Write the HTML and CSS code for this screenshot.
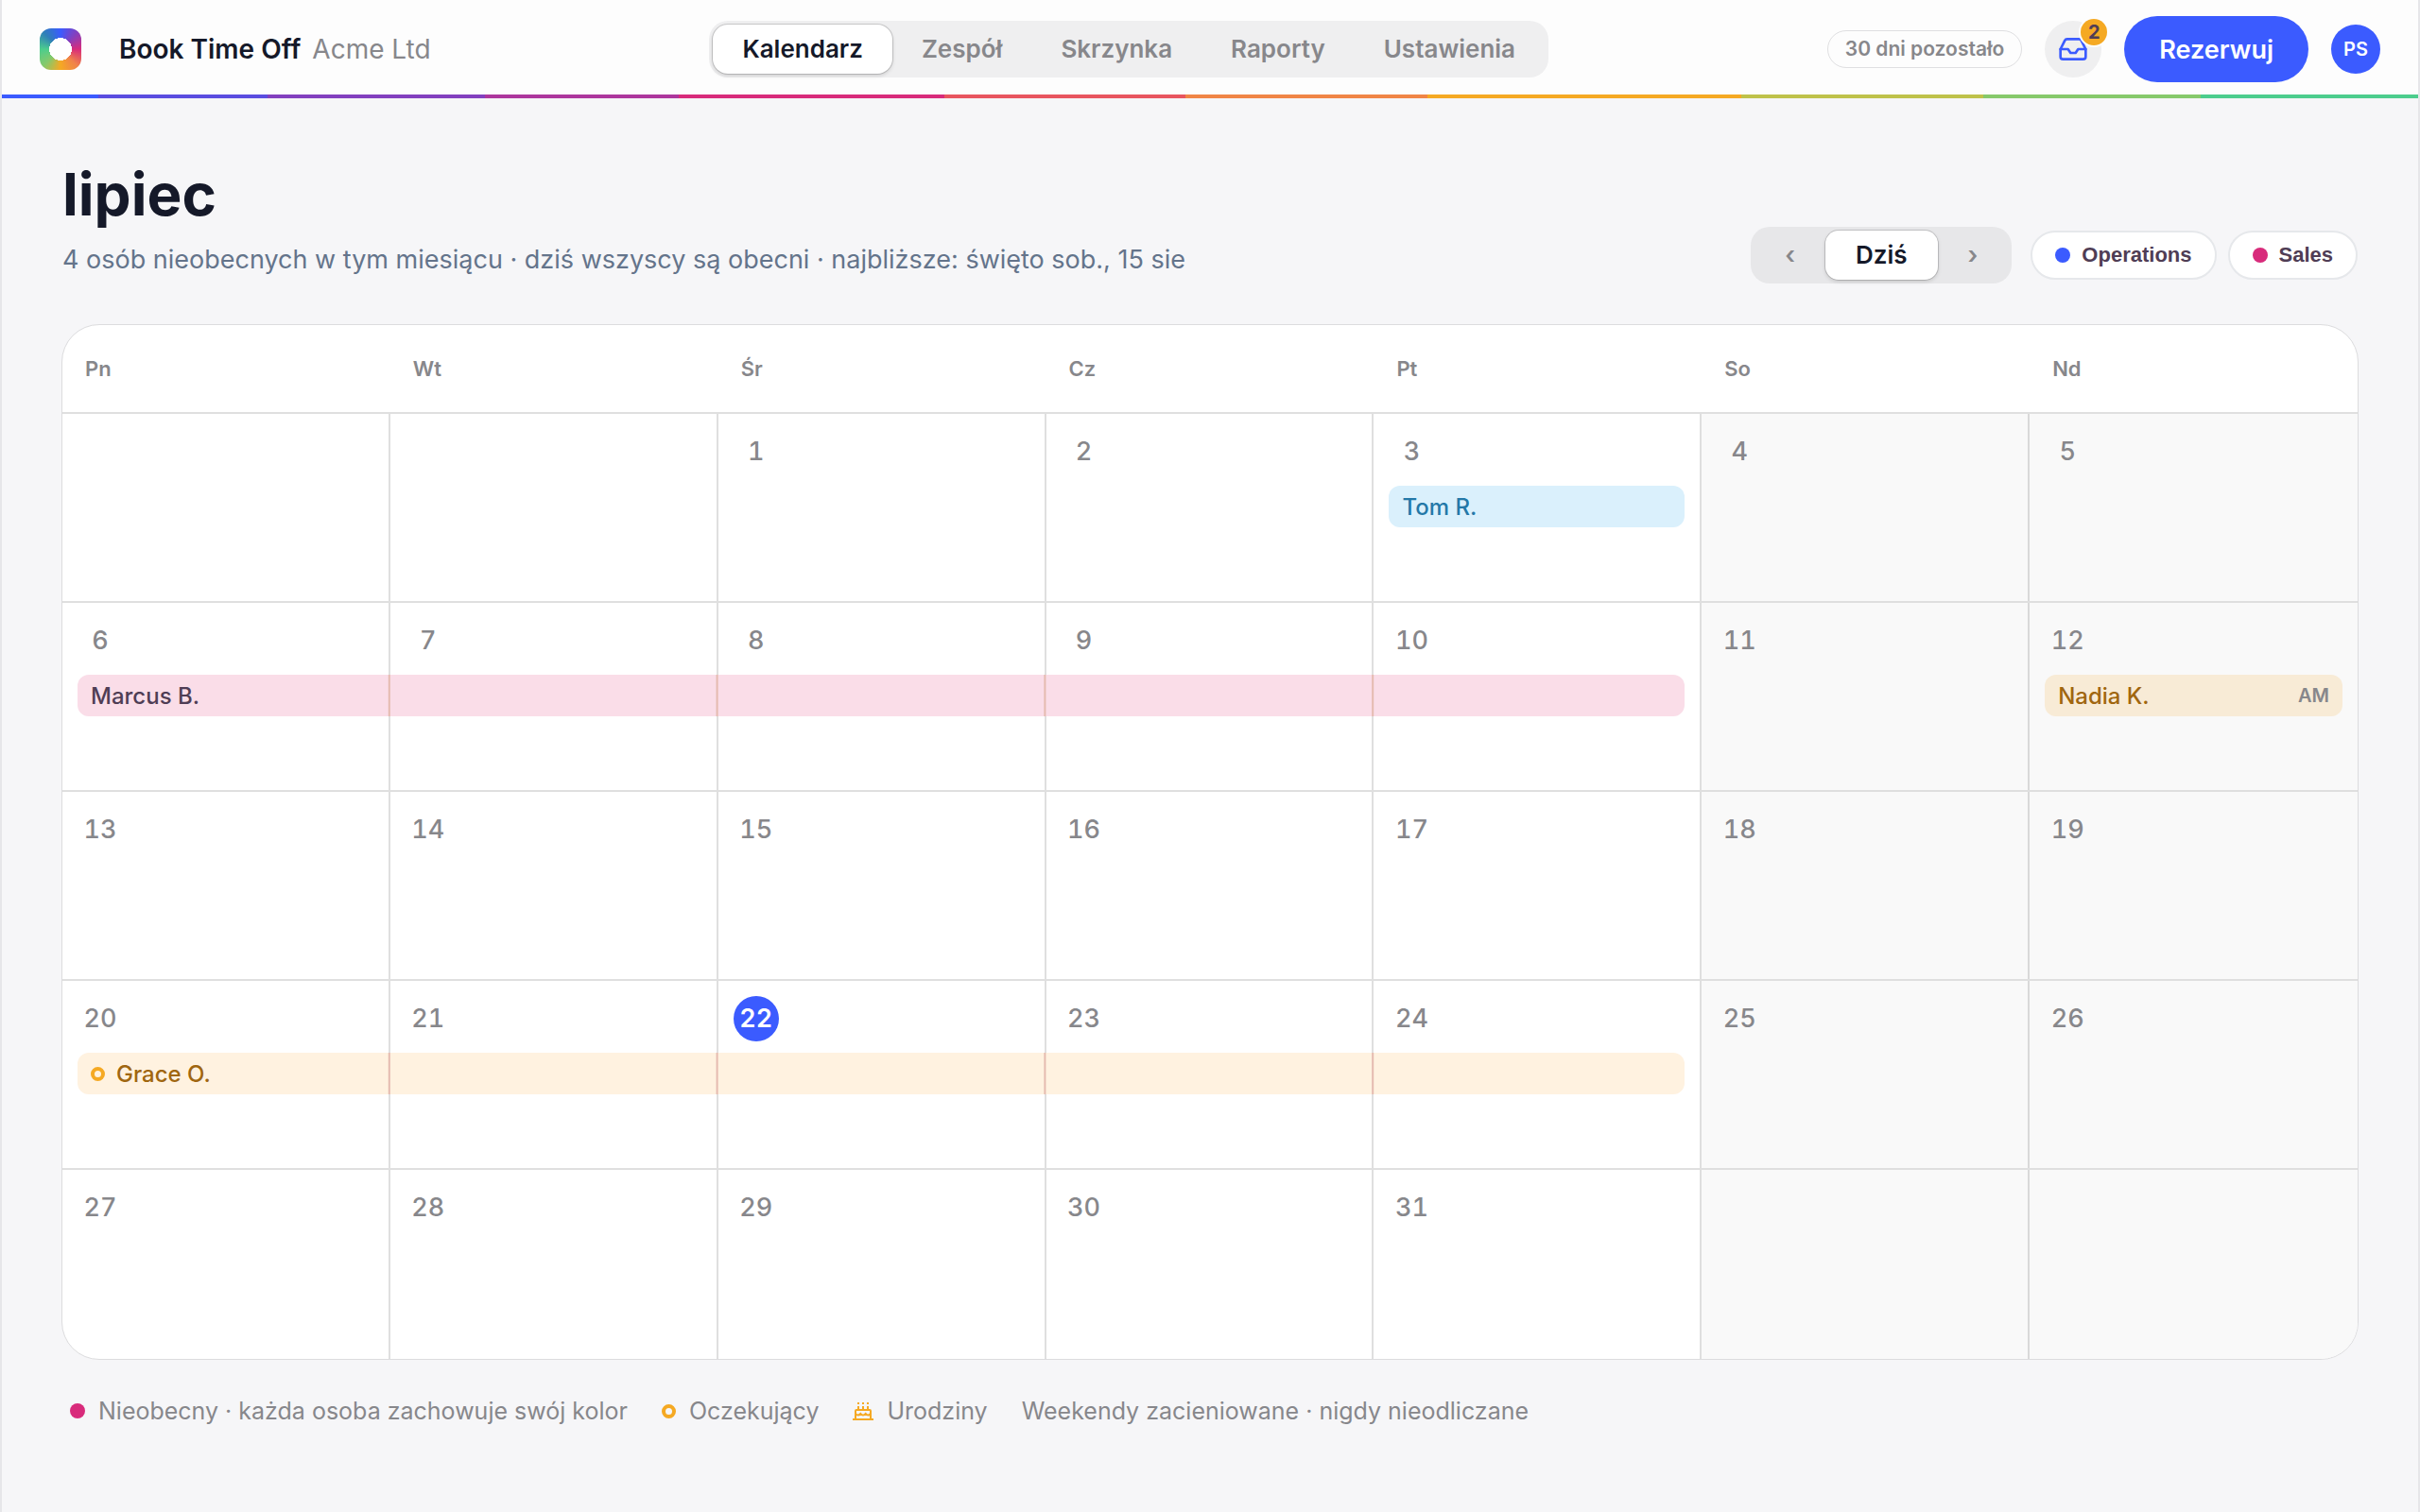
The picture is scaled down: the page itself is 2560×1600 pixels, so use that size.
FILE: index.html
```html
<!DOCTYPE html>
<html lang="pl">
<head>
    <meta charset="UTF-8">
    <meta name="viewport" content="width=device-width, initial-scale=1.0">
    <title>Book Time Off</title>
    <link rel="stylesheet" href="styles.css">
</head>
<body>
    <header class="topbar">
        <div class="brand">
            <div class="logo"></div>
            <div class="brand-text">
                <strong>Book Time Off</strong>
                <span>Acme Ltd</span>
            </div>
        </div>
        <nav class="tabs">
            <a href="#" class="tab active">Kalendarz</a>
            <a href="#" class="tab">Zespół</a>
            <a href="#" class="tab">Skrzynka</a>
            <a href="#" class="tab">Raporty</a>
            <a href="#" class="tab">Ustawienia</a>
        </nav>
        <div class="tools">
            <span class="days-left">30 dni pozostało</span>
            <button class="inbox" aria-label="Skrzynka">
                <svg viewBox="0 0 24 24" width="32" height="32" fill="none" stroke="currentColor" stroke-width="2" stroke-linejoin="round" stroke-linecap="round">
                    <path d="M22 12h-6l-2 3h-4l-2-3H2"/>
                    <path d="M5.450 5.110 2 12v6a2 2 0 0 0 2 2h16a2 2 0 0 0 2-2v-6l-3.450-6.890A2 2 0 0 0 16.760 4H7.240a2 2 0 0 0-1.790 1.110z"/>
                </svg>
                <span class="badge">2</span>
            </button>
            <button class="book">Rezerwuj</button>
            <span class="avatar">PS</span>
        </div>
    </header>
    <div class="stripe"></div>

    <main>
        <div class="page-head">
            <div>
                <h1>lipiec</h1>
                <p class="summary">4 osób nieobecnych w tym miesiącu · dziś wszyscy są obecni · najbliższe: święto sob., 15 sie</p>
            </div>
            <div class="filters">
                <div class="pager">
                    <button aria-label="Poprzedni">‹</button>
                    <button class="active">Dziś</button>
                    <button aria-label="Następny">›</button>
                </div>
                <div class="chips">
                    <button class="chip"><span class="dot blue"></span>Operations</button>
                    <button class="chip"><span class="dot pink"></span>Sales</button>
                </div>
            </div>
        </div>

        <section class="calendar">
            <div class="weekdays">
                <div>Pn</div>
                <div>Wt</div>
                <div>Śr</div>
                <div>Cz</div>
                <div>Pt</div>
                <div>So</div>
                <div>Nd</div>
            </div>
            <div class="week">
                <div class="day"></div>
                <div class="day"></div>
                <div class="day"><span>1</span></div>
                <div class="day"><span>2</span></div>
                <div class="day"><span>3</span></div>
                <div class="day"><span>4</span></div>
                <div class="day"><span>5</span></div>
                <div class="event friday sky">Tom R.</div>
            </div>
            <div class="week">
                <div class="day"><span>6</span></div>
                <div class="day"><span>7</span></div>
                <div class="day"><span>8</span></div>
                <div class="day"><span>9</span></div>
                <div class="day"><span>10</span></div>
                <div class="day"><span>11</span></div>
                <div class="day"><span>12</span></div>
                <div class="event workweek rose">Marcus B.</div>
                <div class="event sunday sand">Nadia K. <small>AM</small></div>
            </div>
            <div class="week">
                <div class="day"><span>13</span></div>
                <div class="day"><span>14</span></div>
                <div class="day"><span>15</span></div>
                <div class="day"><span>16</span></div>
                <div class="day"><span>17</span></div>
                <div class="day"><span>18</span></div>
                <div class="day"><span>19</span></div>
            </div>
            <div class="week">
                <div class="day"><span>20</span></div>
                <div class="day"><span>21</span></div>
                <div class="day today"><span>22</span></div>
                <div class="day"><span>23</span></div>
                <div class="day"><span>24</span></div>
                <div class="day"><span>25</span></div>
                <div class="day"><span>26</span></div>
                <div class="event workweek cream"><i class="ring"></i>Grace O.</div>
            </div>
            <div class="week">
                <div class="day"><span>27</span></div>
                <div class="day"><span>28</span></div>
                <div class="day"><span>29</span></div>
                <div class="day"><span>30</span></div>
                <div class="day"><span>31</span></div>
                <div class="day"></div>
                <div class="day"></div>
            </div>
        </section>

        <div class="legend">
            <span><i class="dot pink"></i>Nieobecny · każda osoba zachowuje swój kolor</span>
            <span><i class="ring"></i>Oczekujący</span>
            <span>
                <svg viewBox="0 0 22 22" width="22" height="22" fill="none" stroke="#f5a923" stroke-width="2">
                    <path d="M0 20h22M3 20v-9q0-1 1-1h14q1 0 1 1v9"/>
                    <path d="M3 14q2.700 3 5.300 0q2.700 3 5.400 0q2.700 3 5.300 0"/>
                    <path d="M6 6v4M11 6v4M16 6v4M6 2v2M11 2v2M16 2v2"/>
                </svg>
                Urodziny
            </span>
            <span>Weekendy zacieniowane · nigdy nieodliczane</span>
        </div>
    </main>
</body>
</html>
```
FILE: styles.css
```css
* {
    box-sizing: border-box;
}
body {
    margin: 0;
    min-height: 100vh;
    border-left: 2px solid #e6e6e9;
    border-right: 2px solid #e6e6e9;
    background-color: #f6f6f8;
    color: #151929;
    font-family: Inter, "Liberation Sans", sans-serif;
    font-size: 24px;
}
button {
    border: none;
    background: none;
    font: inherit;
    color: inherit;
    cursor: pointer;
}
.topbar {
    display: flex;
    justify-content: space-between;
    align-items: center;
    height: 100px;
    padding: 4px 40px 0;
    background-color: #fdfdfd;
}
.brand {
    display: flex;
    align-items: center;
    gap: 40px;
}
.logo {
    width: 44px;
    height: 44px;
    border-radius: 12px;
    background: radial-gradient(circle, #fff 12px, transparent 12px),
        conic-gradient(#3b5bff, #8340bf 45deg, #d82b7b 90deg, #f0834a 135deg, #f5a923 180deg, #86c96b 225deg, #4ccd8d 270deg, #2f7fb8 315deg, #3b5bff);
}
.brand-text {
    display: flex;
    gap: 12px;
    font-size: 28px;
}
.brand-text strong {
    font-weight: 600;
}
.brand-text span {
    color: #87878b;
}
.tabs {
    display: flex;
    padding: 4px;
    border-radius: 20px;
    background-color: #efeff0;
}
.tab {
    padding: 0 31px;
    border-radius: 16px;
    color: #87878b;
    font-size: 26px;
    font-weight: 600;
    line-height: 52px;
    text-decoration: none;
}
.tab.active,
.pager .active {
    background-color: #fff;
    color: #151929;
    box-shadow: 0 0 0 1px rgba(0, 0, 0, 0.15), 0 2px 4px rgba(0, 0, 0, 0.15);
}
.tools {
    display: flex;
    align-items: center;
    gap: 24px;
}
.days-left {
    padding: 0 18px;
    border: 1px solid #dfdfe1;
    border-radius: 20px;
    color: #87878b;
    font-size: 21px;
    font-weight: 600;
    line-height: 38px;
}
.inbox {
    position: relative;
    display: flex;
    align-items: center;
    justify-content: center;
    width: 60px;
    height: 60px;
    padding: 0;
    border-radius: 50%;
    background-color: #efeff0;
    color: #3b5bff;
}
.badge {
    position: absolute;
    top: -2px;
    right: -6px;
    width: 28px;
    border-radius: 50%;
    background-color: #f5a923;
    box-shadow: 0 0 0 2px #fdfdfd;
    color: #4f3d55;
    font-size: 20px;
    font-weight: 700;
    line-height: 28px;
    text-align: center;
}
.book {
    height: 70px;
    padding: 0 37px;
    border-radius: 35px;
    background-color: #3b5bff;
    color: #fff;
    font-size: 27px;
    font-weight: 600;
}
.avatar {
    width: 52px;
    border-radius: 50%;
    background-color: #3b5bff;
    color: #fff;
    font-size: 20px;
    font-weight: 600;
    line-height: 52px;
    text-align: center;
}
.stripe {
    height: 4px;
    background: linear-gradient(90deg, #3b5bff 4%, #5a4de0 4% 11%, #8340bf 11% 20%, #ad369d 20% 28%, #d82b7b 28% 39%, #e8555f 39% 49%, #f08546 49% 59%, #f5a923 59% 72%, #bfc24a 72% 82%, #86c96b 82% 91%, #4ccd8d 91%);
}
main {
    padding: 56px 63px;
}
.page-head {
    display: flex;
    justify-content: space-between;
    align-items: flex-end;
    margin-bottom: 43px;
    padding: 0 1px;
}
h1 {
    margin: 0;
    font-size: 62px;
    font-weight: 700;
    line-height: 92px;
}
.summary {
    margin: 0 0 2px;
    color: #64748b;
    font-size: 27px;
    line-height: 46px;
}
.filters,
.chips {
    display: flex;
    align-items: center;
}
.filters {
    gap: 20px;
}
.chips {
    gap: 12px;
}
.pager {
    display: flex;
    padding: 4px;
    border-radius: 20px;
    background-color: #e7e7e9;
}
.pager button {
    padding: 0 32px;
    border-radius: 14px;
    color: #87878b;
    font-size: 26px;
    font-weight: 600;
    line-height: 52px;
}
.pager .active {
    color: #151929;
}
.chip {
    display: flex;
    align-items: center;
    gap: 12px;
    height: 52px;
    padding: 0 24px;
    border: 2px solid #e6e8eb;
    border-radius: 26px;
    background-color: #fff;
    color: #4f3d55;
    font-family: "Liberation Sans", sans-serif;
    font-size: 22px;
    font-weight: 700;
}
.dot {
    width: 16px;
    height: 16px;
    border-radius: 50%;
}
.blue {
    background-color: #3b5bff;
}
.pink {
    background-color: #d82b7b;
}
.ring {
    width: 15px;
    height: 15px;
    border: 4px solid #f5a923;
    border-radius: 50%;
}
.calendar {
    overflow: hidden;
    border: 1px solid #dcdcde;
    border-radius: 40px;
    background-color: #fff;
}
.weekdays,
.week {
    display: grid;
    grid-template-columns: repeat(7, 1fr);
}
.weekdays {
    color: #87878b;
    font-size: 22px;
    font-weight: 600;
    line-height: 92px;
}
.weekdays div {
    padding-left: 24px;
}
.week {
    border-top: 2px solid #dfdfdf;
}
.day {
    grid-row: 1;
    height: 198px;
    padding: 16px;
    border-right: 2px solid #dfdfdf;
    color: #87878b;
    font-size: 27px;
    font-weight: 500;
    font-variant-numeric: tabular-nums;
}
.week:last-child .day {
    height: 200px;
}
.day:nth-child(1) { grid-column: 1; }
.day:nth-child(2) { grid-column: 2; }
.day:nth-child(3) { grid-column: 3; }
.day:nth-child(4) { grid-column: 4; }
.day:nth-child(5) { grid-column: 5; }
.day:nth-child(6) { grid-column: 6; }
.day:nth-child(7) { grid-column: 7; }
.day:nth-child(6),
.day:nth-child(7) {
    background-color: #f9f9f9;
    border-color: #d9d9d9;
}
.day:nth-child(7) {
    border-right: none;
}
.day span {
    display: block;
    width: 48px;
    border-radius: 50%;
    line-height: 48px;
    text-align: center;
}
.today span {
    background-color: #3b5bff;
    color: #fff;
    font-weight: 600;
}
.event {
    grid-row: 1;
    display: flex;
    align-items: center;
    gap: 12px;
    height: 44px;
    margin: 76px 18px 0 16px;
    padding: 0 14px;
    border-radius: 12px;
    font-weight: 500;
}
.event small {
    margin-left: auto;
    color: #87878b;
    font-size: 20px;
    font-weight: 600;
}
/* day separators stay visible through a bar that spans several days */
.workweek {
    grid-column: 1 / span 5;
    background-image: linear-gradient(90deg, transparent calc(100% - 2px), #e5bbb0 0);
    background-size: calc((100% + 34px) / 5) 100%;
    background-position: -16px 0;
}
.friday {
    grid-column: 5;
}
.sunday {
    grid-column: 7;
    margin-right: 16px;
}
.sky {
    background-color: #daf0fc;
    color: #2478a8;
}
.rose {
    background-color: #fadde8;
    color: #4f3d55;
}
.sand {
    background-color: #f8ebd6;
    color: #a0660f;
}
.cream {
    background-color: #fff2e0;
    color: #a0660f;
}
.legend {
    display: flex;
    gap: 36px;
    margin-top: 36px;
    padding-left: 9px;
    color: #87878b;
    font-size: 25px;
    line-height: 36px;
}
.legend span {
    display: flex;
    align-items: center;
    gap: 14px;
}
```
